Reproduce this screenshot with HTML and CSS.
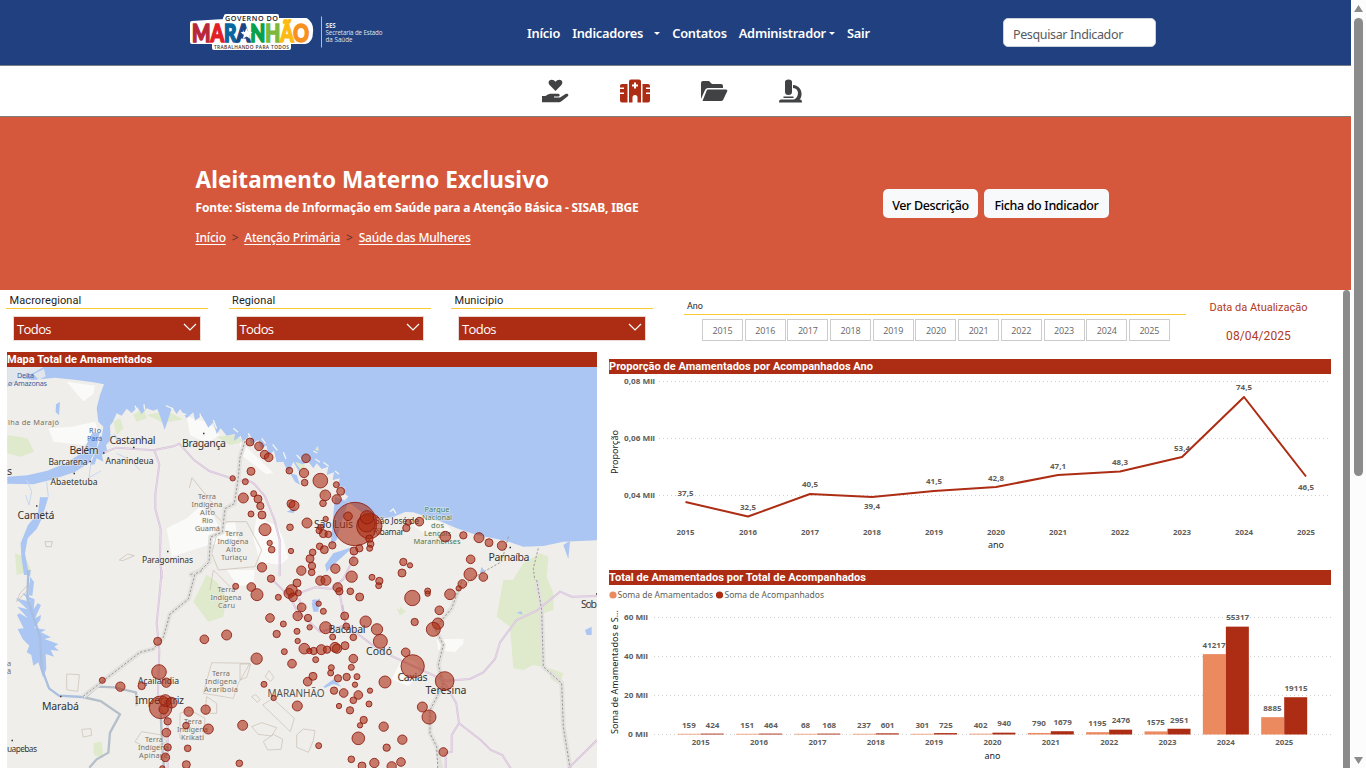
FILE: index.html
```html
<!DOCTYPE html>
<html lang="pt-BR">
<head>
<meta charset="utf-8">
<title>Aleitamento Materno Exclusivo</title>
<link rel="stylesheet" href="styles.css">
</head>
<body>
<div class="page">
  <header class="topbar">
    <svg class="logo" width="200" height="44" viewBox="187 10 200 44">
      <path class="plate" d="M226 16H277V20H306Q312 24 311 32Q311 41 305 42H289V48H214V42H192V23L224 21z"/>
      <text class="gov" x="225" y="21" textLength="53">GOVERNO DO</text>
      <text class="big" x="192" y="41.500" textLength="117" lengthAdjust="spacingAndGlyphs"><tspan class="l1">M</tspan><tspan class="l2">A</tspan><tspan class="l3">R</tspan><tspan class="l4">A</tspan><tspan class="l5">N</tspan><tspan class="l6">H</tspan><tspan class="l7">Ã</tspan><tspan class="l8">O</tspan></text>
      <path d="M246.500 28l1.700 3.900 4.200.2-3.300 2.600 1.100 4.100-3.700-2.300-3.700 2.300 1.100-4.100-3.300-2.600 4.200-.2z" fill="#fff"/>
      <text class="tiny" x="214" y="49" textLength="75">TRABALHANDO PARA TODOS</text>
      <path d="M321.500 16.500V47.500" stroke="#aebcd6"/>
      <g class="ses"><text x="325.500" y="27.500">SES</text><text x="325.500" y="34.500" textLength="57">Secretaria de Estado</text><text x="325.500" y="41.500" textLength="27">da Saúde</text></g>
    </svg>
    <nav class="menu">
      <a>Início</a><a class="wide">Indicadores<i class="caret"></i></a><a>Contatos</a><a>Administrador<i class="caret"></i></a><a>Sair</a>
    </nav>
    <div class="search">Pesquisar Indicador</div>
  </header>
  <div class="iconbar">
    <svg width="27" height="24" viewBox="0 0 27 24"><path d="M13.500 12L7.600 6C5.500 3.500 7 .7 9.500.7c2 0 3 .8 4 2 1-1.200 2-2 4-2 2.500 0 4 2.800 1.900 5.300z"/><path d="M0 17h3.500c2-1.700 4-2.200 6.500-2.200h6c2.200 0 2.200 2.700 0 2.700h-4v1h6l5.500-3.500c2-1.200 4 .8 2.300 2.300l-6 4.700c-1 .8-2 1.300-3.500 1.300H0z"/></svg>
    <svg class="active" width="30" height="24" viewBox="0 0 30 24"><path d="M11 .5h8q2 0 2 2v21h-3.500v-5a2.500 2.500 0 0 0-5 0v5H9v-21q0-2 2-2zM2 5h5.500v18.500H2q-2 0-2-2V15h4v-1.500H0V10h4V8.500H0V7q0-2 2-2zm20.500 0H28q2 0 2 2v1.500h-4V10h4v3.500h-4V15h4v6.500q0 2-2 2h-5.500z"/><path d="M14 3.500h2V5.500h2v2H16v2h-2v-2H12v-2H14z" fill="#fff"/></svg>
    <svg width="27" height="24" viewBox="0 0 27 24"><path d="M0 20V4q0-2 2-2h6l3 3h9q2 0 2 2v2H7q-2 0-3 2z"/><path d="M7 10.500h18q2 0 1.200 1.700l-4 8.500Q21.500 22 20 22H1.500l4.300-10.700q.4-.8 1.200-.8z"/></svg>
    <svg width="24" height="24" viewBox="0 0 24 24"><path d="M6 3q0-2.500 3.500-2.500T13 3v10q0 3-3.500 3T6 13zM4.500 17.500h10V19h-10zM0 23.500q0-3 2-3h13c5-2 6-11-1-11.500V6c10 1 10 12 6.500 14.500h.5q2 0 2 3z"/></svg>
  </div>
  <section class="hero">
    <div class="intro">
      <h1>Aleitamento Materno Exclusivo</h1>
      <p class="source">Fonte: Sistema de Informação em Saúde para a Atenção Básica - SISAB, IBGE</p>
      <p class="crumbs"><a>Início</a><b>&gt;</b><a>Atenção Primária</a><b>&gt;</b><a>Saúde das Mulheres</a></p>
    </div>
    <div class="actions"><button class="b1">Ver Descrição</button><button class="b2">Ficha do Indicador</button></div>
  </section>
  <main class="report">
    <div class="slicers">
      <div class="slicer"><label>Macroregional</label><div class="drop">Todos<svg width="14" height="8"><path d="M1 1l6 6 6-6"/></svg></div></div>
      <div class="slicer"><label>Regional</label><div class="drop">Todos<svg width="14" height="8"><path d="M1 1l6 6 6-6"/></svg></div></div>
      <div class="slicer"><label>Municipio</label><div class="drop">Todos<svg width="14" height="8"><path d="M1 1l6 6 6-6"/></svg></div></div>
      <div class="years"><label>Ano</label><div class="tiles"><span>2015</span><span>2016</span><span>2017</span><span>2018</span><span>2019</span><span>2020</span><span>2021</span><span>2022</span><span>2023</span><span>2024</span><span>2025</span></div></div>
      <div class="updated"><p class="u1">Data da Atualização</p><p class="u2">08/04/2025</p></div>
    </div>
    <div class="visuals">
      <section class="mapcol">
        <h2>Mapa Total de Amamentados</h2>
        <svg class="map" width="590" height="401" viewBox="7 367 590 401">
          <rect x="7" y="367" width="590" height="401" fill="#efeeea"/>
          <g transform="translate(0 365) scale(.33333)">
            <g fill="#fafaf9"><path d="M200 50l85 12-5 25-30 22zM145 190l70-5 70-15 15 45-50 25-90-10zM500 490l60-30 40-35 35 20 20 35 50-10 10 60-90 10-110 35zM560 155l65 15 35 40-40 25-50-25zM720 228l100 95-20 5-80-60zM770 450l30 20 30 10 20 40 15 60-25 20-60-10-20-70z"/></g>
            <g fill="#dfe9cb"><path d="M22 210l60 10 20 40-40 15-40-10zM45 565l30 10 20 45-45 10zM400 150l30-20 10 30-30 10zM440 150l60-12 50 25-60 10zM650 215l60-5 20 20-40 10zM340 170l20-10 10 30-20 20z"/></g>
            <path fill="#abc6f2" d="M135 5H1800V525L1690 530 1630 543 1570 545 1520 528 1490 522 1430 510 1370 490 1320 468 1280 455 1240 442 1215 441 1180 456 1150 460 1120 452 1095 450 1070 430 1050 415 1035 405 1045 395 1028 380 1035 368 1012 362 1020 340 998 345 1002 322 980 330 985 305 965 312 950 295 940 310 925 290 905 300 900 325 880 290 865 325 850 290 830 292 822 257 805 272 800 242 782 250 775 225 752 238 748 212 728 232 722 212 702 228 705 207 680 212 662 190 650 207 640 172 625 188 605 152 585 167 580 142 560 160 540 132 530 147 516 126 505 162 494 194 480 152 472 132 460 137 440 130 425 147 412 127 395 144 380 131 365 152 350 145 338 172 330 182 332 225 318 240 322 262 306 270 310 290 290 280 284 298 270 300 305 215 310 185 295 170 290 130 300 90 312 58 280 52 230 45 165 38 100 45 60 40 22 65V5z"/>
            <path fill="#efeeea" d="M22 5h110l-25 15-85 40zM100 28l32-16 5 22-20 10z" opacity=".8"/>
            <path fill="none" stroke="#f1f5ef" stroke-width="4" d="M405 122l6 14M432 118l2 16M498 122l22 10M545 145l14 4M600 146l4 22M640 165l10 26M700 190l14 12M745 205l8 16M785 220l12 16M818 238l14 18M850 262l8 20M890 270l16 16M940 258l12 6M946 282l14 10M970 292l16 12M1005 318l12 10M1170 440l10-8 8 14"/>
            <path fill="#abc6f2" d="M22 335l60-4 60-14 55-22 50-32 30-60 22 0-10 50-22 40-42 28-65 22-60 15-78-2zM120 397l25 0-20 65-15 30-27 28-8 45 12 65H72l-8-55-2-40 22-55 30-35zM168 118l12-7-3 40-10-10zM340 205l20 20-10 3zM860 440l30-15-10 20zM1005 395l40 15-20 60-15 55-18 15 5-60z"/>
            <path fill="none" stroke="#c5d7f2" stroke-width="3" d="M80 345l15 35-8 40-10-30M140 350l5 45M350 265l40 20 30 30M272 298l-5 40 35-20"/>
            <g fill="none" stroke="#d5bfd8" stroke-width="6"><path id="r1" d="M310 263l40-15 110 8 60-12 18-8 45 50 45 32 90 30 20-4 22 10 35 40 28 70 16 60 0 110M463 257l15 40-12 90 0 45 16 60-2 80 5 70"/></g>
            <path fill="none" stroke="#f0e6f1" stroke-width="2" d="M310 263l40-15 110 8 60-12 18-8 45 50 45 32 90 30 20-4 22 10 35 40 28 70 16 60 0 110M463 257l15 40-12 90 0 45 16 60-2 80 5 70"/>
            <g fill="none" stroke="#c5b9ac" stroke-width="2"><path d="M568 370l8-32 60 75-5 22 40 40M650 510l30-40 60 0 45 85-20 50-110 10-20-50zM135 530l22 0-3 15-16 0zM358 585l25-18 20 5-35 15z"/></g>
            <path fill="none" stroke="#e2e1de" stroke-width="14" d="M735 228l-15 50-5 60-12 78-28 15-8 70-35 15-5 75-25 25-35 15"/>
            <path fill="none" stroke="#9c9a98" stroke-width="3" stroke-dasharray="7 5" d="M735 228l-15 50-5 60-12 78-28 15-8 70-35 15-5 75-25 25-35 15"/>
          </g>
          <g transform="translate(230 420) scale(.33333)">
            <path fill="#f7f8f6" d="M530 300l60-10 60 25 20 20-90 5z"/>
            <path fill="#dfe9cb" d="M255 90l8-12 4 14zM880 430l50-30 25 10-5 60 20 50 0 50-30 10-35-30-85 50 10-90zM620 330l30 15-20 10zM500 565l20 10-10 12zM270 205l20 10-8 20zM195 125l30 10-10 20z"/>
            <g fill="#abc6f2"><path d="M310 400l60-20-60 55-20 20-5-20zM1000 375l20-13-5 55zM180 160l20 5 10 30-15-10zM755 440l10 15-15 5zM245 540l15-2-5 25z"/></g>
            <path fill="none" stroke="#9c9a98" stroke-width="3" stroke-dasharray="7 5" d="M835 350l-20 75-80 45-60 50-5 40-30 40M925 385l-15 60 10 80 10 60"/>
            <path fill="none" stroke="#d5bfd8" stroke-width="6" d="M123 475l60 60 25 55M180 530l75-28 50 5 35-30 30-60 0-25M326 500l15 90"/>
            <path fill="none" stroke="#f0e6f1" stroke-width="2" d="M123 475l60 60 25 55M180 530l75-28 50 5 35-30 30-60 0-25M326 500l15 90"/>
          </g>
          <g transform="translate(0 570) scale(.33333)">
            <path fill="#dfe9cb" d="M620 15l30 20 30 45-10 60-45 15-45-60zM280 520l25-5 5 50-28-10z"/>
            <path fill="#fafaf9" d="M680 0l85 0-5 40-45 10z"/>
            <path fill="#abc6f2" d="M76 0l16 0-6 80 18 8-3 30 12-18 10 5-18 40 18-10-2 14-18 25 35 5-15 8 30 15-20 5 42 15-12 8 14 12-25-2 10 20-25-8 2 45-10 25-14-45-15 10-6-32-14-8 8-20-20-20-15-30 18-2-20-40 8-5 25 15-32-35 30 8-35-33 45 10-25-25 30 8 5-42z"/>
            <g fill="none" stroke="#a9bfdf" stroke-width="7"><path d="M85 0l-3 85 38 115 5 95 22 60 30 22 70 4"/><path stroke="#b4bfc9" d="M247 381l55 12 58 40-30 55-5 60-35 20-22 25M258 380l35-30 50 2 65 15 2 40M482 430l5 100 5 65"/></g>
            <path fill="none" stroke="#e2e1de" stroke-width="14" d="M605 2l-20 10-20 75-55 45-20 70-30 35-40 10-110 85-60 47"/>
            <path fill="none" stroke="#9c9a98" stroke-width="3" stroke-dasharray="7 5" d="M605 2l-20 10-20 75-55 45-20 70-30 35-40 10-110 85-60 47"/>
            <path fill="none" stroke="#d5bfd8" stroke-width="6" d="M485 0l-5 60-10 100 8 80-5 160 30 50 0 145"/>
            <path fill="none" stroke="#f0e6f1" stroke-width="2" d="M485 0l-5 60-10 100 8 80-5 160 30 50 0 145"/>
            <g fill="none" stroke="#c8bdb1" stroke-width="2"><path d="M635 278l115 2-35 60-15 45-90-15zM200 312l38 2-5 50-33-5zM245 478l28-2 2 20-25 5zM405 515l20-30 60 10 15 20-50 25zM620 380l30 20 0 30-35 0zM50 95l10-25 28-30 0 15zM540 430l30-10 45 25-5 65-70-5zM640 0l50 50M630 60l10-60"/></g>
          </g>
          <g transform="translate(240 580) scale(.33333)">
            <path fill="#fafaf9" d="M490 228l40 20 10 35-35 35-50-20zM590 178l80-2 0 15-25 25-50-5z"/>
            <path fill="#dfe9cb" d="M790 0l100 0 15 90 0 170-25-5-30 15-30-5-10-125-40-30zM480 80l18 15-18 10zM930 265l40 15-10 35-30-20z"/>
            <path fill="#abc6f2" d="M215 70l25-15-5 40-15 0zM250 320l30-22 25 22-25-8-25 12zM1035 150l20-10 0 25-15 0zM830 98l14-4 4 10z"/>
            <g fill="none" stroke="#e2e1de" stroke-width="14"><path d="M665 5l-30 80-50 60 25 50-15 60 15 60-40 75 0 70 20 40 20 100M890 0l15 90 5 170 55 50 5 130 20 124"/></g>
            <g fill="none" stroke="#9c9a98" stroke-width="3" stroke-dasharray="7 5"><path d="M665 5l-30 80-50 60 25 50-15 60 15 60-40 75 0 70 20 40 5 100M890 0l15 90 5 170 55 50 5 130 20 124"/></g>
            <path fill="none" stroke="#d5bfd8" stroke-width="6" d="M178 55l7 50 55 50 60-15 17-5-10-60M240 155l80-18 100 75 195 90 75-5 40-20 35-40 15-50 50-67 60-28 70-57 35 15 76-2M614 310l35 60 8 60-22 35 0 50-18 5 0 50M657 430l65 50 30 30 35 15 25 40M1071 480l-85 84"/>
            <path fill="none" stroke="#f0e6f1" stroke-width="2" d="M178 55l7 50 55 50M320 137l100 75 195 90 75-5 40-20 35-40 15-50 50-67 60-28 70-57 35 15 76-2M614 310l35 60 8 60-22 35 0 50-18 5 0 50M657 430l65 50 30 30 35 15 25 40M1071 480l-85 84"/>
            <g fill="none" stroke="#c8bdb1" stroke-width="2"><path d="M68 375l30-20 65 60-12 40zM35 440l30-12 45 15-15 25-40-5zM70 485l30-22 28 15-5 30-40 2zM170 465l20-18 35 5-5 30-15 35-35-15zM75 290l12-18 15 20-10 12zM35 350l12-6 14 15-9 8zM0 252h32l-12 40-20 8z"/></g>
          </g>
          <g class="places">
            <text class="w" x="17" y="378" textLength="17">Delta</text><text class="w" x="8" y="386" textLength="39">o Amazonas</text>
            <text class="w" x="89" y="433" textLength="12">Rio</text><text class="w" x="87" y="440.500" textLength="15">Pará</text>
            <text class="s" x="8" y="425" textLength="51">lha de Marajó</text>
            <text class="c" x="109.500" y="443.500" textLength="46">Castanhal</text><text class="c" x="69.500" y="454" textLength="29">Belém</text>
            <text class="m" x="48.500" y="465" textLength="39">Barcarena</text><text class="m" x="105.500" y="464" textLength="48">Ananindeua</text>
            <text class="m" x="50.500" y="485" textLength="47">Abaetetuba</text><text class="c" x="182" y="446.500" textLength="44">Bragança</text>
            <text class="c" x="17.500" y="519" textLength="37">Cametá</text><text class="m" x="142" y="563" textLength="51">Paragominas</text>
            <text class="c" x="7" y="475">s</text>
            <g class="t"><text x="198" y="498.500" textLength="18">Terra</text><text x="191.500" y="506.500" textLength="31">Indígena</text><text x="200" y="514.500" textLength="15">Alto</text><text x="202" y="522.500" textLength="11">Rio</text><text x="195" y="530.500" textLength="25">Guamá</text>
            <text x="225" y="535.500" textLength="18">Terra</text><text x="217.500" y="543.500" textLength="31">Indígena</text><text x="226" y="551.500" textLength="15">Alto</text><text x="221" y="559.500" textLength="26">Turiaçu</text>
            <text x="217.500" y="592" textLength="18">Terra</text><text x="210.500" y="600" textLength="31">Indígena</text><text x="218" y="608" textLength="17">Caru</text>
            <text x="212" y="676" textLength="18">Terra</text><text x="205" y="684" textLength="32">Indígena</text><text x="204" y="692" textLength="34">Arariboia</text>
            <text x="184" y="724" textLength="18">Terra</text><text x="177" y="732" textLength="31">Indígena</text><text x="181" y="740" textLength="23">Krikati</text>
            <text x="145" y="741.500" textLength="18">Terra</text><text x="138" y="749.500" textLength="31">Indígena</text><text x="139" y="757.500" textLength="29">Apinaye</text></g>
            <g class="t p"><text x="424.500" y="511.500" textLength="25">Parque</text><text x="422" y="519.500" textLength="30">Nacional</text><text x="431" y="527.500" textLength="13">dos</text><text x="424" y="535.500" textLength="27">Lençóis</text><text x="413.500" y="543.500" textLength="47">Maranhenses</text></g>
            <text class="c" x="314" y="528" textLength="39">São Luís</text><text class="m" x="375" y="524" textLength="44">São José de</text><text class="m" x="373" y="534.500" textLength="31">Ribamar</text>
            <text class="c" x="488.500" y="561" textLength="41">Parnaíba</text><text class="c" x="581" y="608" textLength="16">Sob</text>
            <text class="c" x="328.500" y="633" textLength="37">Bacabal</text><text class="c" x="366" y="655" textLength="26">Codó</text><text class="c" x="397.500" y="680.500" textLength="30">Caxias</text><text class="c" x="425.500" y="694" textLength="41">Teresina</text>
            <text class="g" x="267.500" y="697" textLength="57">MARANHÃO</text>
            <text class="m" x="138" y="684" textLength="41">Açailandia</text><text class="c" x="135" y="703.500" textLength="49">Imperatriz</text><text class="c" x="42" y="710" textLength="37">Marabá</text>
            <text class="m" x="7" y="752" textLength="30">uapebas</text><text class="s" x="7" y="666">a</text><text class="s" x="7" y="674">ã</text>
            <path d="M103 453h1.500M133 447.500h1.500M203 433.500h1.500M89.500 461.500h1.500M73.500 473.500h1.500M36 506h1.500M167 551.500h1.500M509.500 547.500h1.500M60 696.500h1.500M11.500 740.500h1.500M596 594h1" stroke="#333" stroke-width="1.600"/>
          </g>
          <g class="bubbles" id="bubbles"></g>
        </svg>
      </section>
      <section class="chartcol">
        <h2>Proporção de Amamentados por Acompanhados Ano</h2>
        <svg class="chart" id="line" width="722" height="196" viewBox="609 374 722 196"></svg>
        <h2>Total de Amamentados por Total de Acompanhados</h2>
        <svg class="chart" id="bars" width="722" height="183" viewBox="609 585 722 183"></svg>
      </section>
    </div>
  </main>
</div>
<div class="innerbar"></div>
<div class="scrollbar"><i class="up"></i><i class="thumb"></i><i class="down"></i></div>
<script src="script.js"></script>
</body>
</html>
```
FILE: styles.css
```css
*{box-sizing:border-box}
html,body{margin:0;height:100%;overflow:hidden}
body{font-family:"Noto Sans",sans-serif;background:#fff;position:relative;width:1366px;height:768px}
.page{width:1351px;height:768px;overflow:hidden}
p,h1,h2{margin:0}
.topbar{height:66px;background:#204080;border-bottom:1px solid #7a7d86;display:flex;align-items:flex-start;padding:10px 0 0 187px}
.logo{flex:none}
.logo .plate{fill:#fff;stroke:#fff;stroke-width:4;stroke-linejoin:round}
.logo text{font-family:"Open Sans",sans-serif;font-size:7.200px;font-weight:600}
.logo .big{font-family:Lato,sans-serif;font-size:25px;font-weight:900;stroke-width:1.600px}
.l1{fill:#b8283a;stroke:#b8283a}
.l2{fill:#e21f26;stroke:#e21f26}
.l3{fill:#08679f;stroke:#08679f}
.l4{fill:#1d4583;stroke:#1d4583}
.l5{fill:#08a04b;stroke:#08a04b}
.l6{fill:#7db83c;stroke:#7db83c}
.l7{fill:#fdbb11;stroke:#fdbb11}
.l8{fill:#f7901e;stroke:#f7901e}
.logo .gov{fill:#222}
.logo .tiny{font-size:4.800px;fill:#333}
.logo .ses text{font-size:6.200px;font-weight:400;fill:#dfe6f2}
.logo .ses text:first-child{font-weight:700}
.menu{display:flex;width:476px;margin-left:140px;padding-top:14px;gap:12px;color:#fff;font-weight:600;font-size:12.800px;line-height:18px;white-space:nowrap;letter-spacing:-.22px}
.caret{display:inline-block;border:3px solid transparent;border-top-color:#fff;border-bottom:0;vertical-align:3px;margin-left:3px}
.wide .caret{margin-left:11px}
.search{width:153px;height:29px;margin-top:8px;background:#fff;border:1px solid #ccd2dc;border-radius:5px;padding:7px 0 0 9px;font-size:12.500px;line-height:17px;letter-spacing:-.37px;color:#555a60;white-space:nowrap}
.iconbar{height:51px;border-bottom:1px solid #807e7c;display:flex;padding:13px 0 0 542px;gap:51px;fill:#404244}
.iconbar .active{fill:#ac2d13}
.hero{height:173px;background:#d5583c;display:flex;color:#fff;padding-left:195.500px}
.intro{width:687.500px;padding-top:45px;white-space:nowrap}
h1{font-size:22.500px;line-height:36px;font-weight:700;letter-spacing:.1px}
.source{font-size:12px;line-height:20px;font-weight:700;letter-spacing:-.14px}
.crumbs{font-size:12px;line-height:20px;padding-top:10px;font-weight:500;display:flex;letter-spacing:-.2px}
.crumbs a{text-decoration:underline;text-underline-offset:2px}
.crumbs b{font-weight:400;color:#5e3028;width:18.500px;text-align:center}
.actions{display:flex;gap:6px;padding-top:72px}
button{height:29px;border:0;border-radius:5px;background:#f8f9fa;font:500 12.500px "Noto Sans",sans-serif;letter-spacing:-.35px;color:#000;padding:3px 0 0;white-space:nowrap}
.b1{width:95px}.b2{width:125px}
.report{height:478px;width:1343px}
.slicers{height:62px;display:flex;padding-left:6px}
.slicer{width:202px;margin-right:20.500px}
label{display:block;font:11px/18px Roboto,sans-serif;color:#252423}
.slicer label{height:19px;border-bottom:1px solid #fbc933;padding:1.500px 0 0 3.500px;letter-spacing:.1px}
.drop{margin:7px 7px 0 7px;height:25px;border:1px solid #d8a79d;outline:1px solid #ead8d4;outline-offset:-1px;background:#ac2d13;color:#fff;display:flex;justify-content:space-between;padding:3px 3px 0 3px;font:13px/18px "Open Sans",sans-serif;letter-spacing:-.6px}
.drop svg{margin-top:3px;fill:none;stroke:#fff;stroke-width:1.200}
.years{width:502px;margin-left:10.500px}
.years label{height:25px;border-bottom:1px solid #fbc933;padding:7px 0 0 3px;font-size:9px}
.tiles{display:flex;gap:1.700px;padding:4px 0 0 18px}
.tiles span{width:41px;height:22px;border:1px solid #ccc;color:#666;font:9px/21px "Open Sans",sans-serif;letter-spacing:-.15px;text-align:center}
.updated{width:145px;text-align:center;color:#b03a22;font-family:Roboto,sans-serif;padding-top:10px;white-space:nowrap}
.u1{font-size:11px;line-height:15px}
.u2{font-size:12px;line-height:16px;margin-top:13px;letter-spacing:.1px}
.visuals{display:flex;padding-left:7px;gap:12px}
.mapcol{width:590px}
.chartcol{width:722px;padding-top:7px}
h2{height:15px;background:#ac2d13;color:#fff;font:700 11px/15px Roboto,sans-serif;white-space:nowrap;letter-spacing:.04px}
svg{display:block}
.places text{font-family:"Noto Sans",sans-serif;fill:#333;stroke:#efeeea;stroke-width:1.500px;paint-order:stroke;stroke-opacity:.6}
.places .c{font-size:10.500px}
.places .m{font-size:8.600px}
.places .w{font-size:7.200px;fill:#3d5fa0;stroke:none}
.places .s,.places .t text{font-size:7.400px;fill:#777066}
.places .p text{fill:#487a58}
.places .g{font-size:10px;fill:#555}
.bubbles circle{fill:#ac2d13;fill-opacity:.6;stroke:#8a1a10;stroke-width:2.500}
.chart text{font-family:"Noto Sans",sans-serif;font-size:7.800px;font-weight:700;fill:#605e5c}
.chart .n{font-weight:400;font-size:8.500px}
.chart .title{font-weight:400;font-size:8.800px;fill:#252423}
.chart .grid{stroke:#d0d0d0;stroke-dasharray:1 3}
.innerbar{position:absolute;left:1343px;top:290px;width:7px;height:478px;background:#8b8b8b;border-radius:4px 4px 0 0}
.scrollbar{position:absolute;left:1351px;top:0;width:15px;height:768px;background:#fcfcfc;display:flex;flex-direction:column;align-items:center}
.scrollbar i{display:block;width:9px}
.up{height:7px;margin-top:5px;background:#8b8b8b;clip-path:polygon(50% 0,100% 100%,0 100%)}
.thumb{height:458px;margin-top:6px;background:#8b8b8b;border-radius:5px}
.down{height:7px;margin-top:281px;background:#8b8b8b;clip-path:polygon(0 0,100% 0,50% 100%)}
```
FILE: script.js
```js
// Bubble clusters: [offset x, offset y, "x,y,r ..."] in thirds of a pixel
const clusters = [
[230,420,"60,66,12 87,79,13 104,104,13 116,112,13 228,115,13 63,154,12 178,152,10 222,159,14 224,188,10 271,182,22 319,194,9 332,214,12 286,226,16 320,238,14 279,250,10 8,175,8 46,185,9 71,221,9 84,237,12 91,258,11 40,234,15 183,251,12 192,257,15 63,282,9 96,285,12 375,312,65 418,318,38 410,310,26 411,292,20 354,289,13 287,297,8 231,309,15 180,322,10 105,329,18 272,322,9 267,332,9 280,341,12 295,343,10 119,369,8 125,389,10 183,393,8 269,379,10 283,389,12 307,376,11 248,397,10 240,416,12 246,438,11 245,457,10 214,452,14 316,446,14 372,393,12 388,385,11 418,356,11 422,372,10 419,385,9 371,424,13 365,470,17 426,472,9 448,483,11 446,497,9 516,459,12 520,426,11 540,436,8 568,305,13 529,324,11 535,307,9 646,350,16 700,346,11 747,353,15 777,368,12 816,377,14 722,418,13 721,463,19 760,471,13 697,492,13 686,505,8 660,523,16 593,513,9 593,521,8 628,571,13 547,534,23 96,442,14 123,476,11 201,489,12 271,482,14 288,481,15 323,502,14 328,514,11 361,514,10 389,531,12 17,499,9 64,501,13 81,524,18 145,532,9 177,520,15 185,511,17 189,532,13 205,519,9 215,562,13 203,588,14 234,594,11 266,551,8 280,574,9 344,588,12 120,594,13"],
[240,580,"130,132,9 209,142,8 171,154,9 110,162,11 257,143,18 319,139,10 377,125,17 411,148,17 421,184,21 278,171,9 340,172,10 173,183,8 193,206,16 221,213,11 208,213,8 244,209,15 261,209,11 285,202,15 291,206,14 315,197,12 133,215,9 227,239,9 340,236,13 334,262,9 50,236,17 156,251,13 274,263,9 272,279,9 219,289,12 203,305,13 294,295,11 320,291,11 351,290,9 345,314,8 282,332,11 311,339,13 355,345,13 340,361,10 390,332,8 387,372,9 297,378,8 330,391,11 72,313,9 101,354,8 172,378,15 371,420,11 360,436,8 355,475,19 431,440,14 487,479,14 440,503,11 236,497,9 334,538,10 366,558,12 403,549,14 455,559,14 483,546,13 435,306,18 497,217,13 518,259,35 614,303,28 547,381,15 567,411,21 610,516,13 524,126,11 594,131,17 580,148,21"],
[0,570,"473,214,12 307,331,9 361,350,14 425,348,11 477,306,22 499,338,14 482,412,34 496,392,18 515,398,16 491,418,14 503,454,11 499,488,13 503,532,11 496,562,13 563,535,10 559,584,12 558,467,10 566,425,14 617,419,14 625,477,15 613,208,13 680,195,15 718,580,10 728,466,15 487,595,8"]];
document.getElementById('bubbles').innerHTML = clusters.map(([x, y, s]) =>
  `<g transform="translate(${x} ${y}) scale(.33333)">` + s.split(' ').map(c => {
    const [cx, cy, r] = c.split(',');
    return `<circle cx="${cx}" cy="${cy}" r="${r}"/>`;
  }).join('') + '</g>').join('');

const text = (x, y, s, w, cls = '', anchor = 'middle') =>
  `<text x="${x}" y="${y}" class="${cls}" text-anchor="${anchor}"${w ? ` textLength="${w}" lengthAdjust="spacingAndGlyphs"` : ''}>${s}</text>`;
const grid = (y, x) => `<path class="grid" d="M${x} ${y}H1331"/>`;

const pts = [[685.5,502,'37,5',496],[748,516.5,'32,5',510],[810,494,'40,5',487],[872,497,'39,4',509],[934,491,'41,5',484],[996,487,'42,8',481],[1058,475,'47,1',469],[1120,471.5,'48,3',465],[1182,457,'53,4',451],[1244,397,'74,5',390],[1306,476.5,'46,5',490]];
let out = grid(381.5, 659) + grid(438.5, 659) + grid(495.5, 659);
out += text(655, 384, '0,08 Mil', 31, '', 'end') + text(655, 441, '0,06 Mil', 31, '', 'end') + text(655, 498, '0,04 Mil', 31, '', 'end');
out += `<path d="M${pts.map(p => p[0] + ' ' + p[1]).join('L')}" fill="none" stroke="#ac2d13" stroke-width="2" stroke-linejoin="round"/>`;
pts.forEach((p, i) => { out += text(p[0], p[3], p[2], 16) + text(p[0], 535, 2015 + i, 18); });
out += text(996, 548, 'ano', 16, 'title') + `<g transform="rotate(-90 617.5 452)">${text(617.5, 452, 'Proporção', 44, 'title')}</g>`;
document.getElementById('line').innerHTML = out;

const a = [159,151,68,237,301,402,790,1195,1575,41217,8885];
const b = [424,464,168,601,725,940,1679,2476,2951,55317,19115];
out = '<circle cx="613" cy="595" r="3.6" fill="#eb895f"/><circle cx="719.5" cy="595" r="3.6" fill="#ac2d13"/>';
out += text(617.5, 598, 'Soma de Amamentados', 95.5, 'n', 'start') + text(724.5, 598, 'Soma de Acompanhados', 99.500, 'n', 'start');
[60, 40, 20, 0].forEach((v, i) => { const y = 617.5 + i * 39; out += grid(y, 654) + text(648, y + 2.5, v + ' Mil', v ? 24 : 20, '', 'end'); });
a.forEach((v, i) => {
  const c = 700.7 + 58.35 * i, w = b[i];
  const h1 = Math.max(.7, v * .00195), h2 = Math.max(.9, w * .00195);
  out += `<rect x="${c - 23}" y="${734.5 - h1}" width="23" height="${h1}" fill="#eb895f"/><rect x="${c}" y="${734.5 - h2}" width="23" height="${h2}" fill="#ac2d13"/>`;
  const tw = n => String(n).length * 4.6;
  out += text(c - 11.8, 727.5 - (h1 > 1.5 ? h1 - .5 : 0), v, tw(v)) + text(c + 11.8, 727.5 - (h2 > 1.5 ? h2 - .8 : 0), w, tw(w)) + text(c, 745, 2015 + i, 18);
});
out += text(992.5, 759, 'ano', 16, 'title') + `<g transform="rotate(-90 617.5 672)">${text(617.5, 672, 'Soma de Amamentados e S...', 124, 'title')}</g>`;
document.getElementById('bars').innerHTML = out;
```
